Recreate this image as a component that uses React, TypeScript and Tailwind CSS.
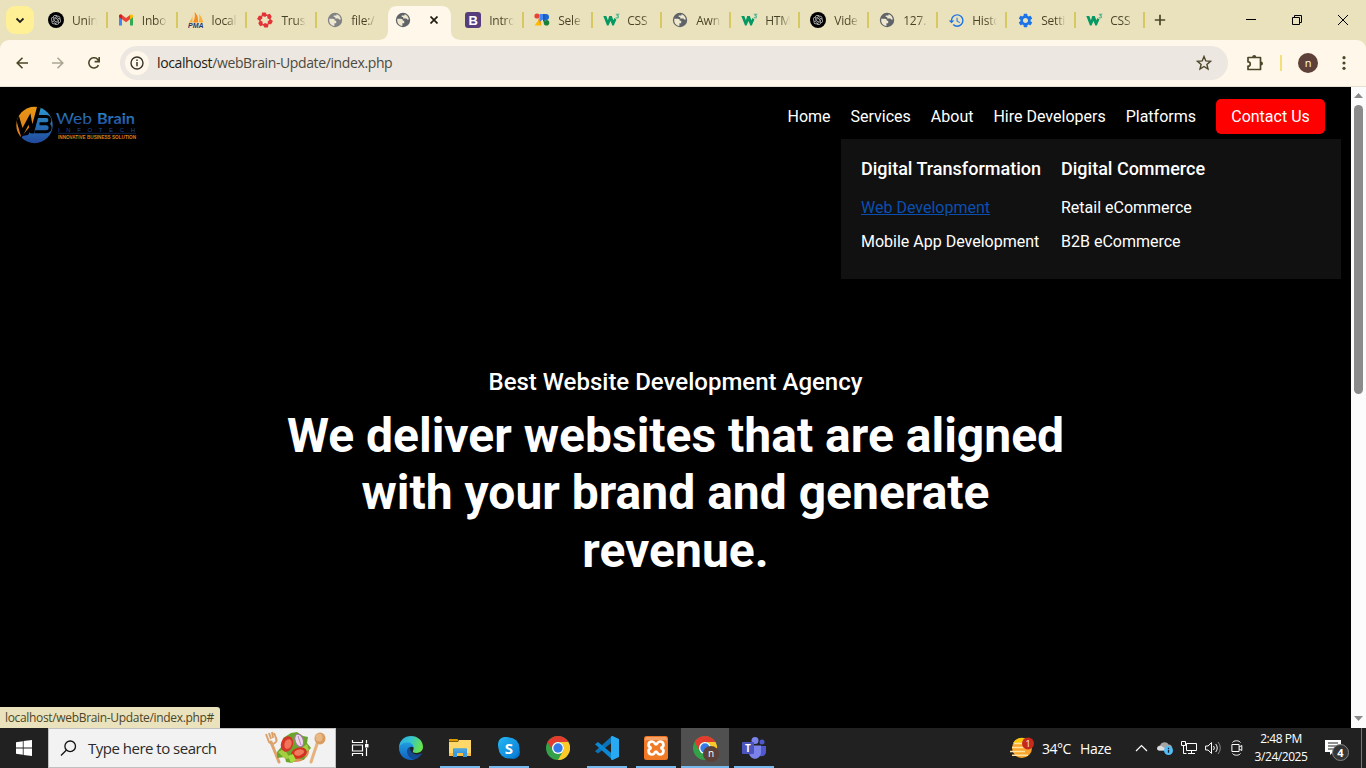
import React from "react";
import { MdSettings, MdHistory } from "react-icons/md";
import { RiOpenaiFill } from "react-icons/ri";

const UI = "font-['Open_Sans','Noto_Sans',sans-serif]";

/* ---------- favicons ---------- */
const OpenAI = () => (
  <span className="flex h-4 w-4 items-center justify-center rounded-full bg-black text-[12px] text-[#d4d4d4]">
    <RiOpenaiFill />
  </span>
);

const Gmail = () => (
  <svg width="16" height="16" viewBox="0 0 16 16">
    <path d="M1 4v9.500h3V7.200L1 4.600z" fill="#4285f4" />
    <path d="M12 7.200v6.300h3V4.400z" fill="#34a853" />
    <path d="M1 4.200c0-1.700 1.700-2.200 3-1.200l4 3 4-3v4.200L8 10.300 4 7.200 1 5z" fill="#ea4335" />
    <path d="M12 3c1.400-1 3-.4 3 1.200v1l-3 2.200z" fill="#fbbc04" />
    <path d="M1 4.200C1 2.800 2.600 2 4 3v4.300L1 5z" fill="#c5221f" />
  </svg>
);

const Pma = () => (
  <svg width="16" height="16" viewBox="0 0 16 16">
    <path d="M4.500 2.500C4.500 6 2.500 8.500 .8 10.500h3.700z" fill="#f9b04b" />
    <path d="M6.500 0C10 3 10.300 7 10 10.500H5C7 7 7.200 3 6.500 0z" fill="#f68b1f" />
    <path d="M11 2c2.500 2.500 3.500 5.500 4.200 8.500h-4.700c1-3 1-5.500.5-8.500z" fill="#fbb040" />
    <text x="0" y="15.800" fontSize="6.400" fontWeight="bold" fontStyle="italic" fontFamily="Liberation Sans" fill="#29356f" textLength="15.500" lengthAdjust="spacingAndGlyphs">PMA</text>
  </svg>
);

const Trust = () => (
  <svg width="16" height="16" viewBox="0 0 16 16" fill="#e23338">
    {[0, 60, 120, 180, 240, 300].map((a) => (
      <g key={a} transform={`rotate(${a} 8 8)`}>
        <path d="M5 .6h3.600l2 3.400H9.200l-1 1-3.700-1.200z" />
      </g>
    ))}
  </svg>
);

const GlobeShape = ({ fill }: { fill: string }) => (
  <svg width="16" height="16" viewBox="0 0 16 16" className="shrink-0">
    <circle cx="8" cy="8" r="7.200" fill={fill} />
    <path d="M2.300 6.700h3.500c1.700 0 2 .8 2 2.100h1.400v2.400H7.400v2.700C3.800 13.800 1.700 10.400 2.300 6.700z" fill="#eee8cf" />
    <path d="M9.600 2.300c2.500.7 4 2.700 4.200 5.200l-1.300.2c-.5-1.200-1.300-1.400-2.500-1.300H8.200V4.900H6.700V3.600h2.700z" fill="#eee8cf" />
  </svg>
);
const Globe = () => <GlobeShape fill="#5f6368" />;
const LightGlobe = () => <GlobeShape fill="#808285" />;

const Bootstrap = () => (
  <span className="flex h-4 w-4 items-center justify-center rounded-[3px] bg-[#563d7c] font-['Liberation_Sans',sans-serif] text-[13px] leading-none font-bold text-white">B</span>
);

const Selector = () => (
  <svg width="16" height="16" viewBox="0 0 16 16">
    <circle cx="3" cy="4" r="2.600" fill="#ea4335" />
    <path d="M.5 13.500L6 6l1.500 7.500z" fill="#fbbc04" />
    <path d="M4 8l3-4v9.500z" fill="#fb9a04" />
    <path d="M5.500 2H9v5.500L6 9.500z" fill="#4285f4" />
    <path d="M9.500 2H12a3 3 0 013 3c0 2-1 3-2.500 3h-3z" fill="#1967d2" />
    <path d="M9 2h1.800v9L9 9z" fill="#185abc" />
    <circle cx="12.500" cy="10.700" r="2.800" fill="#188038" />
  </svg>
);

const W3 = () => (
  <svg width="17" height="16" viewBox="0 0 17 16" className="shrink-0">
    <path d="M.3 4h3l1.600 4.300L6.200 4h2.600l1.600 4.300 1-2.300 2 1.500-2.600 5.900H9.300L7.500 9l-2 4.400H4z" fill="#059862" />
    <path d="M12.800 2.300h2.700L14.300 3.600c1.600.2 1.600 2.400-.3 2.400l-1.300-.5" fill="none" stroke="#4fb38f" strokeWidth="1.100" />
  </svg>
);

type TabInfo = { label?: string; icon: React.ReactNode; active?: boolean; sep?: boolean; wide?: boolean };

const tabs: TabInfo[] = [
  { label: "Unin", icon: <OpenAI />, sep: true, wide: true },
  { label: "Inbo", icon: <Gmail />, sep: true, wide: true },
  { label: "local", icon: <Pma />, sep: true, wide: true },
  { label: "Trust", icon: <Trust />, sep: true, wide: true },
  { label: "file:/", icon: <LightGlobe /> },
  { icon: <Globe />, active: true },
  { label: "Intro", icon: <Bootstrap />, sep: true },
  { label: "Sele", icon: <Selector />, sep: true },
  { label: "CSS", icon: <W3 />, sep: true },
  { label: "Awn", icon: <Globe />, sep: true },
  { label: "HTM", icon: <W3 />, sep: true },
  { label: "Vide", icon: <OpenAI />, sep: true },
  { label: "127.", icon: <Globe />, sep: true },
  { label: "Histo", icon: <MdHistory className="h-[17px] w-[17px] shrink-0 text-[#1a73e8]" />, sep: true },
  { label: "Setti", icon: <MdSettings className="h-[17px] w-[17px] shrink-0 text-[#1a73e8]" />, sep: true },
  { label: "CSS", icon: <W3 />, sep: true },
];

function Tab({ label, icon, active, sep, wide }: TabInfo) {
  if (active) {
    return (
      <div className="relative -mx-px flex h-[34px] w-[71px] shrink-0 items-center self-end pr-1 pb-[1px] pl-[10px]">
        <svg className="absolute top-0 -left-[7px]" width="84" height="34" viewBox="0 0 84 34">
          <path d="M0 34c7 0 10-4 10-9V10C10 4 13 0 19 0h44c7 0 10 4 10 10v15c0 5 3 9 11 9z" fill="#fff8ea" />
        </svg>
        <span className="relative mt-[-5px] flex">{icon}</span>
        <svg className="relative mt-[-5px] ml-[19px]" width="8" height="8" viewBox="0 0 8 8">
          <path d="M.5.5l7 7M7.500.5l-7 7" stroke="#1f1c10" strokeWidth="1.700" />
        </svg>
      </div>
    );
  }
  return (
    <div className={`flex h-10 shrink-0 items-center pl-[10px] ${wide ? "w-[69.800px]" : "w-[69px]"}`}>
      <span className="flex w-4 shrink-0 justify-center">{icon}</span>
      <span className="ml-2 w-[25px] bg-linear-to-r from-[#474225] from-60% to-[#47422500] bg-clip-text pt-px text-[12px] tracking-[-0.2px] whitespace-nowrap text-transparent">
        {label}
      </span>
      <span className={sep ? "ml-auto h-4 w-[2px] bg-[#d7c961]" : "ml-auto h-4 w-[2px]"} />
    </div>
  );
}

function TabStrip() {
  return (
    <div className="flex h-10 items-center bg-[#eae2bd]">
      <div className="ml-[6px] flex h-7 w-7 items-center justify-center rounded-[9px] bg-[#fff095]">
        <svg width="10" height="7" viewBox="0 0 10 7"><path d="M1.500 1.500L5 5l3.500-3.500" fill="none" stroke="#222" strokeWidth="1.800" /></svg>
      </div>
      <div className="ml-[4px] flex h-10 items-center">
        {tabs.map((t, i) => <Tab key={i} {...t} />)}
      </div>
      <svg className="ml-[9px]" width="12" height="12" viewBox="0 0 12 12"><path d="M6 .8v10.400M.8 6h10.400" stroke="#4b4628" strokeWidth="1.700" /></svg>
      <div className="ml-auto flex items-center pr-[17px]">
        <svg width="12" height="12" viewBox="0 0 12 12"><path d="M1 5.500h10" stroke="#000" /></svg>
        <svg className="ml-[34px]" width="12" height="12" viewBox="0 0 12 12"><path d="M1.500 3.500h7v7h-7zM3.500 3.500v-2h7v7h-2" fill="none" stroke="#000" /></svg>
        <svg className="ml-[34px]" width="12" height="12" viewBox="0 0 12 12"><path d="M1 1l10 10M11 1L1 11" stroke="#000" /></svg>
      </div>
    </div>
  );
}

function Toolbar() {
  return (
    <div className="bg-[#eae2bd]">
      <div className="flex h-[47px] items-center rounded-t-[9px] border-b border-[#e5dfcf] bg-[#fff8ea] pl-[16px]">
        <svg width="12" height="12" viewBox="0 0 12 12"><path d="M12 6H1.300M6.500.7L1.200 6l5.300 5.300" fill="none" stroke="#4b4628" strokeWidth="1.600" /></svg>
        <svg className="ml-[24px]" width="12" height="12" viewBox="0 0 12 12"><path d="M0 6h10.700M5.500.7L10.800 6l-5.300 5.300" fill="none" stroke="#aaa693" strokeWidth="1.600" /></svg>
        <svg className="ml-[24px]" width="12" height="12" viewBox="0 0 12 12"><path d="M10.500 8.200A5.100 5.100 0 119.800 2.500L11 4.200M11.200 0v4.600H6.600" fill="none" stroke="#4b4628" strokeWidth="1.600" /></svg>
        <div className="ml-[20px] flex h-[34px] w-[1108px] items-center rounded-full bg-[#ece7e1] pr-[16px] pl-[5px]">
          <div className="flex h-6 w-6 items-center justify-center rounded-full bg-[#fff8ea]">
            <svg width="14" height="14" viewBox="0 0 14 14"><circle cx="7" cy="7" r="6" fill="none" stroke="#37342a" strokeWidth="1.400" /><path d="M7 6v4.200M7 3.600v1.500" stroke="#37342a" strokeWidth="1.500" /></svg>
          </div>
          <div className="ml-[8px] pb-px text-[14px] tracking-[-0.380px] text-[#4d4a40]">
            <span className="text-[#1f1c13]">localhost</span>/webBrain-Update/index.php
          </div>
          <svg className="ml-auto" width="16" height="16" viewBox="0 0 16 16"><path d="M8 1.500l1.800 4.400 4.700.4-3.600 3.100 1.100 4.600L8 11.500 4 14l1.100-4.600-3.600-3.100 4.700-.4z" fill="none" stroke="#4b4628" strokeWidth="1.400" /></svg>
        </div>
        <svg className="ml-[18px]" width="18" height="18" viewBox="0 0 18 18"><path d="M2 3.500h12.500v12H2v-3.300c3 .3 3-4.700 0-4.400z" fill="none" stroke="#4b4628" strokeWidth="1.700" strokeLinejoin="round" /><path d="M6.200 3a2 2 0 014 0zM15 7.500a2 2 0 010 4z" fill="#4b4628" /></svg>
        <span className="ml-[16px] h-4 w-[2px] bg-[#f3e07a]" />
        <span className="ml-[16px] flex h-5 w-5 items-center justify-center rounded-full bg-[#5d4037] pb-[2px] text-[11px] leading-none text-white">n</span>
        <svg className="ml-[24px]" width="4" height="14" viewBox="0 0 4 14" fill="#4b4628"><circle cx="2" cy="1.700" r="1.600" /><circle cx="2" cy="7" r="1.600" /><circle cx="2" cy="12.300" r="1.600" /></svg>
      </div>
    </div>
  );
}

/* ---------- web page ---------- */
function Logo() {
  return (
    <svg width="122" height="40" viewBox="0 0 122 40">
      <defs>
        <linearGradient id="blu" x1="0" y1="0" x2="0" y2="1"><stop offset="0" stopColor="#2f9bd0" /><stop offset="1" stopColor="#20459a" /></linearGradient>
        <linearGradient id="org" x1="0" y1="0" x2="0" y2="1"><stop offset="0" stopColor="#e89a14" /><stop offset="1" stopColor="#e06f1f" /></linearGradient>
        <clipPath id="disc"><circle cx="18.500" cy="20" r="18.200" /></clipPath>
      </defs>
      <g clipPath="url(#disc)">
        <path d="M0 0h24L19 16 3 34 0 40z" fill="url(#org)" />
        <path d="M24.500 0H40v40H3l3-9 6-1 7-11z" fill="url(#blu)" />
        <path d="M1 11l5 17 7.500-14 2.500 14L23.500 0" fill="none" stroke="#000" strokeWidth="3.800" />
        <path d="M22 11.500h8.500c4.500 0 4.500 7.300 0 7.300h-7M30 18.800c5.500 0 5.500 8 0 8H18.500" fill="none" stroke="#000" strokeWidth="3" />
      </g>
      <text x="40" y="18.500" fontFamily="Lato" fontSize="16" fill="url(#blu)" textLength="36" lengthAdjust="spacingAndGlyphs">Web</text>
      <text x="81" y="18.500" fontFamily="Lato" fontSize="15" fontWeight="bold" fill="url(#blu)" textLength="38" lengthAdjust="spacingAndGlyphs">Brain</text>
      <text x="42" y="26.500" fontFamily="Liberation Sans" fontSize="6" fill="#20469a" textLength="77">INFOTECH</text>
      <path d="M42 28.300h78" stroke="#19366f" strokeWidth=".7" />
      <text x="42" y="34" fontFamily="Liberation Sans" fontSize="4.600" fontWeight="bold" fill="#d9821b" textLength="78" lengthAdjust="spacingAndGlyphs">INNOVATIVE BUSINESS SOLUTION</text>
    </svg>
  );
}

function Page() {
  return (
    <main className="flex-1 bg-black font-['Roboto',sans-serif] text-white">
      <header className="relative flex h-[52px] items-start pl-[16px]">
        <div className="mt-[18px]"><Logo /></div>
        <nav className="mt-[12px] mr-[26px] ml-auto flex items-center gap-[20px] text-[16px] leading-[35px]">
          <a>Home</a><a>Services</a><a>About</a><a>Hire Developers</a><a>Platforms</a>
          <a className="h-[35px] w-[109px] rounded-[5px] bg-[#ff0000] text-center">Contact Us</a>
        </nav>
        <div className="absolute top-[52px] right-[10px] flex h-[140px] w-[500px] gap-[20px] bg-[#111] px-[20px] pt-[20px] text-[16px] leading-[19px] whitespace-nowrap">
          <div className="w-[180px]">
            <h4 className="text-[18px] font-medium">Digital Transformation</h4>
            <a className="mt-[20px] block text-[#0a4fb0] underline">Web Development</a>
            <a className="mt-[15px] block">Mobile App Development</a>
          </div>
          <div>
            <h4 className="text-[18px] font-medium">Digital Commerce</h4>
            <a className="mt-[20px] block">Retail eCommerce</a>
            <a className="mt-[15px] block">B2B eCommerce</a>
          </div>
        </div>
      </header>
      <section className="mx-auto mt-[229px] w-[800px] text-center">
        <h3 className="text-[24px] leading-[29px] font-medium">Best Website Development Agency</h3>
        <h1 className="mt-[9.800px] text-[48px] leading-[57.600px] font-bold">We deliver websites that are aligned with your brand and generate revenue.</h1>
      </section>
    </main>
  );
}

function Scrollbar() {
  return (
    <div className="flex w-[15px] flex-col items-center bg-[#fcfcfc]">
      <svg className="mt-[6px]" width="9" height="6" viewBox="0 0 9 6"><path d="M4.500 0L9 5H0z" fill="#8b8b8b" /></svg>
      <div className="mt-[6px] h-[289px] w-[9px] rounded-full bg-[#8b8b8b]" />
      <svg className="mt-auto mb-[7px]" width="9" height="5" viewBox="0 0 9 5"><path d="M4.500 5L9 0H0z" fill="#8b8b8b" /></svg>
    </div>
  );
}

/* ---------- taskbar ---------- */
const Salad = () => (
  <svg width="64" height="34" viewBox="0 0 64 34">
    <path d="M7 11l8 20" stroke="#dfa36b" strokeWidth="3" strokeLinecap="round" />
    <path d="M2 3l3 8c4 4 9 0 7-4l-2-5M5 2l2 6M8 1l1 6" fill="none" stroke="#dca26c" strokeWidth="2" />
    <path d="M54 10L47 31" stroke="#e6b27c" strokeWidth="3" strokeLinecap="round" />
    <ellipse cx="56" cy="7.500" rx="5.500" ry="6" fill="#d99d62" /><ellipse cx="55" cy="6.500" rx="3.500" ry="4" fill="#e8b984" />
    <ellipse cx="31" cy="20" rx="14" ry="11" fill="#d98f55" />
    <path d="M13 21l5-6 1-8 8-5 6-1 6 4 5 1-1 6 4 5-5 5-2 7-7-2-5 5-6-1-1-5-8 1z" fill="#6ca52d" />
    <path d="M14 21l6-3 6 9-4 1-4-3zM35 19l8-6 2 6-5 2z" fill="#a4cf43" />
    <ellipse cx="23" cy="13" rx="6" ry="8" transform="rotate(20 23 13)" fill="#d6352a" />
    <ellipse cx="24" cy="13" rx="3.500" ry="5" transform="rotate(20 24 13)" fill="#f0745a" />
    <ellipse cx="35" cy="22" rx="8" ry="5.500" transform="rotate(-15 35 22)" fill="#d3301f" />
    <ellipse cx="35" cy="21.500" rx="5" ry="3" transform="rotate(-15 35 21)" fill="#f07a5d" />
    <ellipse cx="35" cy="9.500" rx="4" ry="6.500" transform="rotate(-20 35 9)" fill="#ead8e9" stroke="#a873ad" />
    <path d="M34 5l3 9" stroke="#b98abb" />
    <path d="M24 25l5-2 3 6-5 3z" fill="#a6dc3d" />
  </svg>
);

const Edge = () => (
  <svg width="24" height="24" viewBox="0 0 24 24">
    <defs>
      <linearGradient id="e1" x1="0" y1="0" x2="1" y2=".3"><stop offset="0" stopColor="#2fa9e6" /><stop offset=".5" stopColor="#34c5d0" /><stop offset="1" stopColor="#66e34e" /></linearGradient>
      <linearGradient id="e2" x1="0" y1="0" x2="0" y2="1"><stop offset="0" stopColor="#1f9de0" /><stop offset="1" stopColor="#1260bd" /></linearGradient>
    </defs>
    <path d="M0 11C.5 4.500 5.500 0 12 0c7 0 12 5 12 10.800 0 4-3 6.200-6.500 6.200-3 0-4.200-1-3.500-2.300 2-3-.5-6.700-5-6.700-4.500 0-8 1.500-9 4z" fill="url(#e1)" />
    <path d="M0 11.500C1 8 5 6.500 8.500 6.500c3.500 0 6 2 6 5-2-1.500-5.500-.3-5.500 3.200 0 4 3 7.300 7 8.300-1 .6-2.500 1-4 1C5 24 0 18.500 0 12z" fill="url(#e2)" />
    <path d="M8 15c0-2 1.500-3.800 3.500-4.200-1 3.500 1.500 7.500 6 7.700 1.800 0 3.300-.4 4.500-1.100.6-.3 1 .2.700.7C21 21 17.500 23.500 15 23.500 11 22.500 8 19.500 8 15z" fill="#124b91" />
  </svg>
);

const Explorer = () => (
  <svg width="22" height="20" viewBox="0 0 22 20">
    <path d="M0 1h8.500l1.500 2.500H0z" fill="#dc9a00" />
    <path d="M0 4h9l1-2h12v16H0z" fill="#ffd869" /><path d="M0 15h22v3H0z" fill="#f7bf45" />
    <path d="M4 10.500h14V19h-4v-4H8v4H4z" fill="#3a9be0" /><path d="M5 10.500h12v3H5z" fill="#4ba5dd" />
  </svg>
);

const Skype = () => (
  <svg width="24" height="24" viewBox="0 0 24 24">
    <defs><linearGradient id="sk" x1="0" y1="0" x2="1" y2="1"><stop offset="0" stopColor="#22b4f4" /><stop offset="1" stopColor="#087bd2" /></linearGradient></defs>
    <rect x="1" y="1" width="15" height="15" rx="7" fill="#21b2f3" /><rect x="9" y="9" width="14" height="14" rx="7" fill="#0876cf" /><circle cx="12" cy="12" r="10.500" fill="url(#sk)" />
    <text x="12" y="17.500" textAnchor="middle" fontFamily="Open Sans" fontWeight="bold" fontSize="15" fill="#fff">S</text>
  </svg>
);

const ChromeIcon = () => (
  <svg width="24" height="24" viewBox="0 0 24 24">
    <circle cx="12" cy="12" r="12" fill="#34a048" />
    <path d="M1.600 6A12 12 0 0122.400 6H12a6 6 0 00-5.200 9z" fill="#e33b2e" />
    <path d="M22.400 6A12 12 0 0112 24l5.200-9A6 6 0 0012 6z" fill="#fdc928" />
    <circle cx="12" cy="12" r="6" fill="#fff" /><circle cx="12" cy="12" r="4.700" fill="#347be9" />
  </svg>
);

const VsCode = () => (
  <svg width="24" height="24" viewBox="0 0 24 24">
    <path d="M17.500 0v6L3 17.600 0 15.300 16.500.5z" fill="#0a72b7" />
    <path d="M0 8.300L3 6l14.500 12v6z" fill="#0c87d1" />
    <path d="M17.500 0L24 3v18l-6.500 3c-.7 0-1.500-.6-1.500-1V1c0-.5.800-1 1.500-1z" fill="#29a9f2" />
  </svg>
);

const Xampp = () => (
  <svg width="24" height="24" viewBox="0 0 24 24">
    <rect width="24" height="24" rx="2.500" fill="#ef7524" /><rect x="1" y="1" width="22" height="6" rx="2" fill="#f6a369" />
    <rect x="1" y="4" width="22" height="19" rx="2" fill="#f17a27" />
    <path d="M7.500 12C3 11 4 5.500 8 5.500c3 0 2.500 3 4 3s1-3 4-3c4 0 5 5.500.5 6.500 4.500 1 3.500 6.500-.5 6.500-3 0-2.500-3-4-3s-1 3-4 3c-4 0-5-5.500-.5-6.500z" fill="none" stroke="#fff" strokeWidth="2.700" />
  </svg>
);

const Teams = () => (
  <svg width="24" height="22" viewBox="0 0 24 22">
    <circle cx="20" cy="5" r="2.500" fill="#5059c9" /><path d="M16 9h8v6c0 3-3 5-6 4z" fill="#5059c9" />
    <circle cx="13" cy="3.500" r="3.500" fill="#7b83eb" /><path d="M7 8.500h12V15c0 9-12 9-12 0z" fill="#7b83eb" />
    <rect x="0" y="5" width="12" height="12" rx="1" fill="#4b53bc" />
    <text x="6" y="14.500" textAnchor="middle" fontFamily="Open Sans" fontWeight="bold" fontSize="10" fill="#fff">T</text>
  </svg>
);

const ChromeProfile = () => (
  <span className="relative flex">
    <ChromeIcon />
    <span className="absolute top-[10px] left-[10px] flex h-4 w-4 items-center justify-center rounded-full bg-[#5d4037] pb-[2px] text-[10px] leading-none text-white">n</span>
  </span>
);

function TaskItem({ children, open, active }: { children: React.ReactNode; open?: boolean; active?: boolean }) {
  return (
    <div className={active ? "ml-px flex h-10 w-12 flex-col items-center bg-[#505050]" : "flex h-10 w-[49px] flex-col items-center"}>
      <div className="flex h-[38px] items-center pt-[2px]">{children}</div>
      <div className={open ? (active ? "h-[2px] w-full bg-[#76b9ed]" : "ml-px h-[2px] w-10 bg-[#76b9ed]") : "h-[2px]"} />
    </div>
  );
}

function Taskbar() {
  return (
    <footer className="flex h-10 items-center bg-[#212121] text-white">
      <div className="flex w-12 justify-center">
        <svg width="16" height="16" viewBox="0 0 16 16" fill="#fff"><path d="M0 2.200L6.800 1.200v6.400H0zM7.600 1.100L16 0v7.600H7.600zM0 8.400h6.800v6.400L0 13.800zM7.600 8.400H16V16l-8.400-1.100z" /></svg>
      </div>
      <div className="flex h-10 w-[288px] items-center border border-[#c0c0c0] bg-[#f2f2f2] pl-[11px]">
        <svg width="17" height="17" viewBox="0 0 17 17"><circle cx="10.200" cy="6.300" r="5.300" fill="none" stroke="#111" strokeWidth="1.300" /><path d="M6.500 10L1 15.500" stroke="#111" strokeWidth="1.300" /></svg>
        <span className="ml-[11px] text-[15px] tracking-[-0.500px] whitespace-nowrap text-[#2b2b2b]">Type here to search</span>
        <span className="mr-[7px] ml-auto"><Salad /></span>
      </div>
      <div className="flex w-[50px] justify-center pr-[2px]">
        <svg width="18" height="16" viewBox="0 0 18 16"><path d="M1.500 0v2.500h10V0M1.500 16v-2.500h10V16M1.500 5h10v6h-10zM15.500 0v3.500M15.500 8v8" fill="none" stroke="#fff" strokeWidth="1.200" /><path d="M14 4h3.500v3.500H14z" fill="#fff" /></svg>
      </div>
      <TaskItem><Edge /></TaskItem>
      <TaskItem open><Explorer /></TaskItem>
      <TaskItem open><Skype /></TaskItem>
      <TaskItem><ChromeIcon /></TaskItem>
      <TaskItem open><VsCode /></TaskItem>
      <TaskItem open><Xampp /></TaskItem>
      <TaskItem open active><ChromeProfile /></TaskItem>
      <TaskItem open><Teams /></TaskItem>
      <div className="ml-auto flex items-center">
        <svg width="26" height="22" viewBox="0 0 26 22">
          <circle cx="12" cy="11" r="10" fill="#f9a42a" /><path d="M3 6a10 10 0 0112-4.600L12 6z" fill="#fdc70c" />
          <path d="M4 6.500h13M2 10.500h15M0 14.500h15M2 18.200h16" stroke="#ffe3a3" strokeWidth="1.600" />
          <circle cx="18" cy="6.500" r="6" fill="#c42b1c" />
          <text x="18" y="10" textAnchor="middle" fontSize="9" fontFamily="Open Sans" fill="#fff">1</text>
        </svg>
        <span className="ml-[6px] w-[38px] text-[14px] tracking-[-0.5px] whitespace-nowrap">34°C</span>
        <span className="w-[31px] text-[14px] tracking-[-0.3px] whitespace-nowrap">Haze</span>
        <svg className="ml-[24px]" width="13" height="8" viewBox="0 0 13 8"><path d="M1 7l5.500-5.500L12 7" fill="none" stroke="#fff" strokeWidth="1.200" /></svg>
        <svg className="ml-[9px]" width="16" height="14" viewBox="0 0 16 14"><path d="M2 9.500C-1 8 0 4.500 3 4.500 4 .5 10 0 11.500 3.500 14 3.500 15 5 15 7v2.500z" fill="#a5a5a5" /><path d="M0 8c.5-2.500 2-3.500 4.500-3L11 9.500H3C1.500 9.500.5 9 0 8z" fill="#dedede" /><circle cx="11.500" cy="9.500" r="4.500" fill="#55bdf5" /><path d="M11.500 8.800v3M11.500 6.800v1.200" stroke="#123" strokeWidth="1.300" /></svg>
        <svg className="ml-[8px]" width="17" height="15" viewBox="0 0 17 15"><path d="M5.500 2.500h10v7h-10zM10.500 9.500v3M7 12.500h7M.5.500h4v4h-4zM2.500 4.500v8h3" fill="none" stroke="#fff" /></svg>
        <svg className="ml-[7px]" width="17" height="14" viewBox="0 0 17 14"><path d="M.6 5h2.500L6.500 1.500v11L3.100 9H.6z" fill="none" stroke="#fff" /><path d="M8.500 5a3 3 0 010 4M10.700 3a6 6 0 010 8" fill="none" stroke="#fff" /><path d="M13 1a9 9 0 010 12" fill="none" stroke="#888" /></svg>
        <svg className="ml-[9px]" width="12" height="16" viewBox="0 0 12 16"><path d="M1.500 2.500C3 .2 8 .2 9.500 2.500M1.500 13.500c1.500 2.300 6.500 2.300 8 0M.9 4.500h7.200v7H.9zM8.100 7l2.700-1.500v5L8.100 9" fill="none" stroke="#fff" /></svg>
        <div className="ml-[9px] w-[58px] text-center text-[12px] leading-[18px] tracking-[-0.450px] whitespace-nowrap">
          <div>2:48 PM</div><div>3/24/2025</div>
        </div>
        <svg className="ml-[15px]" width="25" height="25" viewBox="0 0 25 25">
          <path d="M0 4h16v12H8l-3 3v-3H0z" fill="#fff" /><path d="M3 7h10M3 10h10M3 13h7" stroke="#222" />
          <circle cx="15.500" cy="16.500" r="8" fill="#353535" stroke="#858585" />
          <text x="15.500" y="20.500" textAnchor="middle" fontFamily="Open Sans" fontSize="11" fontWeight="bold" fill="#fff">4</text>
        </svg>
        <span className="mr-1 ml-[11px] h-10 w-px bg-[#777]" />
      </div>
    </footer>
  );
}

export default function App() {
  return (
    <div className={`${UI} relative flex h-[768px] w-[1366px] flex-col overflow-hidden bg-black`}>
      <TabStrip />
      <Toolbar />
      <div className="flex min-h-0 flex-1"><Page /><Scrollbar /></div>
      <div className="absolute bottom-10 left-0 flex h-[21px] w-[220px] items-center rounded-tr-[3px] bg-[#eae2bd] pl-[5px] text-[12px] tracking-[-0.330px] whitespace-nowrap text-[#4b4628]">localhost/webBrain-Update/index.php#</div>
      <Taskbar />
    </div>
  );
}
